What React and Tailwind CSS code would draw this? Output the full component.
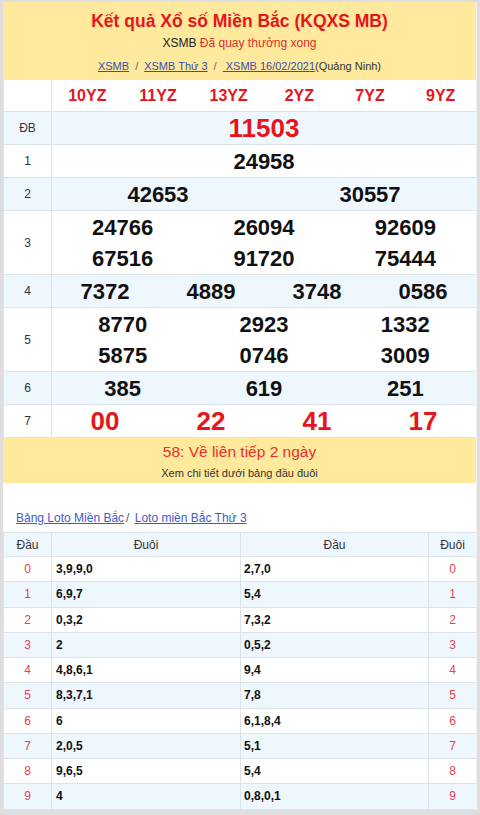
const codes = ['10YZ', '11YZ', '13YZ', '2YZ', '7YZ', '9YZ'];

const prizes = [
  { label: 'ĐB', nums: ['11503'], cols: 1, big: true, red: true, h: 'h-[33px]', blue: true },
  { label: '1', nums: ['24958'], cols: 1, h: 'h-[33px]' },
  { label: '2', nums: ['42653', '30557'], cols: 2, h: 'h-[33px]', blue: true },
  { label: '3', nums: ['24766', '26094', '92609', '67516', '91720', '75444'], cols: 3, h: 'h-[64px]' },
  { label: '4', nums: ['7372', '4889', '3748', '0586'], cols: 4, h: 'h-[33px]', blue: true },
  { label: '5', nums: ['8770', '2923', '1332', '5875', '0746', '3009'], cols: 3, h: 'h-[64px]' },
  { label: '6', nums: ['385', '619', '251'], cols: 3, h: 'h-[33px]', blue: true },
  { label: '7', nums: ['00', '22', '41', '17'], cols: 4, big: true, red: true, h: 'h-[33px]' },
];

const gridCols = {
  1: 'grid-cols-1',
  2: 'grid-cols-2',
  3: 'grid-cols-3',
  4: 'grid-cols-4',
};

const loto = [
  ['3,9,9,0', '2,7,0'],
  ['6,9,7', '5,4'],
  ['0,3,2', '7,3,2'],
  ['2', '0,5,2'],
  ['4,8,6,1', '9,4'],
  ['8,3,7,1', '7,8'],
  ['6', '6,1,8,4'],
  ['2,0,5', '5,1'],
  ['9,6,5', '5,4'],
  ['4', '0,8,0,1'],
];

function PrizeRow({ p }) {
  return (
    <div className={`flex border-b border-[#dde3ea] ${p.h} ${p.blue ? 'bg-[#eef6fe]' : 'bg-white'}`}>
      <div className="w-[48px] shrink-0 border-r border-[#dde3ea] flex items-center justify-center text-[12px] text-[#333]">
        {p.label}
      </div>
      <div className={`flex-1 grid ${gridCols[p.cols]} content-center`}>
        {p.nums.map((n, i) => (
          <div
            key={i}
            className={`text-center font-bold leading-[31px] ${p.big ? 'text-[26px]' : 'text-[22px]'} ${p.red ? 'text-[#e8141c]' : 'text-[#111]'}`}
          >
            {n}
          </div>
        ))}
      </div>
    </div>
  );
}

export default function App() {
  return (
    <div
      className="w-[480px] min-h-[815px] bg-[#dedede] pl-[3px] pr-[3px] pt-[2px]"
      style={{ fontFamily: '"Liberation Sans", Arial, sans-serif' }}
    >
      <div className="bg-white border-r border-[#f2f2f2]">
        {/* header */}
        <div className="h-[78px] bg-[#ffe99d] flex flex-col items-center pt-[8px]">
          <h1 className="text-[17.5px] font-bold text-[#e8141c] leading-[23px]">
            Kết quả Xổ số Miền Bắc (KQXS MB)
          </h1>
          <p className="text-[12px] leading-[18px] text-[#222] mt-[1px]">
            XSMB <span className="text-[#d9302b]">Đã quay thưởng xong</span>
          </p>
          <p className="text-[11px] leading-[16px] text-[#333] mt-[6px]">
            <a className="text-[#3b4ea8] underline">XSMB</a>
            <span className="mx-[6px] text-[#666]">/</span>
            <a className="text-[#3b4ea8] underline">XSMB Thứ 3</a>
            <span className="mx-[6px] text-[#666]">/</span>
            <a className="text-[#3b4ea8] underline"> XSMB 16/02/2021</a>
            (Quảng Ninh)
          </p>
        </div>

        {/* results */}
        <div className="border-l border-[#dde3ea]">
          <div className="flex h-[32px] border-b border-[#dde3ea] bg-white">
            <div className="w-[48px] shrink-0 border-r border-[#dde3ea]" />
            <div className="flex-1 grid grid-cols-6 items-center">
              {codes.map((c) => (
                <div key={c} className="text-center font-bold text-[16px] text-[#e8141c]">
                  {c}
                </div>
              ))}
            </div>
          </div>
          {prizes.map((p) => (
            <PrizeRow key={p.label} p={p} />
          ))}
        </div>

        {/* notice */}
        <div className="h-[45px] bg-[#ffe99d] flex flex-col items-center pt-[4px]">
          <p className="text-[15.5px] leading-[20px] text-[#e8302b]">58: Về liên tiếp 2 ngày</p>
          <p className="text-[11px] leading-[16px] text-[#333] mt-[3px]">Xem chi tiết dưới bảng đầu đuôi</p>
        </div>

        {/* loto links */}
        <div className="pt-[27px] pb-[6px] pl-[13px] text-[12px] leading-[16px] text-[#555]">
          <a className="text-[#3b5bd0] underline">Bảng Loto Miền Bắc</a>
          <span className="mx-[2px]">/</span>{' '}
          <a className="text-[#3b5bd0] underline">Loto miền Bắc Thứ 3</a>
        </div>

        {/* loto table */}
        <div className="border-l border-t border-[#dde3ea] text-[12px]">
          <div className="flex h-[24px] bg-[#eef6fe] border-b border-[#dde3ea] text-[#333]">
            <div className="w-[48px] border-r border-[#dde3ea] flex items-center justify-center">Đầu</div>
            <div className="w-[189px] border-r border-[#dde3ea] flex items-center justify-center">Đuôi</div>
            <div className="w-[188px] border-r border-[#dde3ea] flex items-center justify-center">Đầu</div>
            <div className="flex-1 flex items-center justify-center">Đuôi</div>
          </div>
          {loto.map(([a, b], i) => (
            <div
              key={i}
              className={`flex h-[25.25px] border-b border-[#dde3ea] ${i % 2 ? 'bg-[#eef6fe]' : 'bg-white'}`}
            >
              <div className="w-[48px] border-r border-[#dde3ea] flex items-center justify-center text-[#e8414b]">
                {i}
              </div>
              <div className="w-[189px] border-r border-[#dde3ea] flex items-center pl-[4px] font-bold text-[#111]">
                {a}
              </div>
              <div className="w-[188px] border-r border-[#dde3ea] flex items-center pl-[3px] font-bold text-[#111]">
                {b}
              </div>
              <div className="flex-1 flex items-center justify-center text-[#e8414b]">{i}</div>
            </div>
          ))}
        </div>
      </div>
    </div>
  );
}
